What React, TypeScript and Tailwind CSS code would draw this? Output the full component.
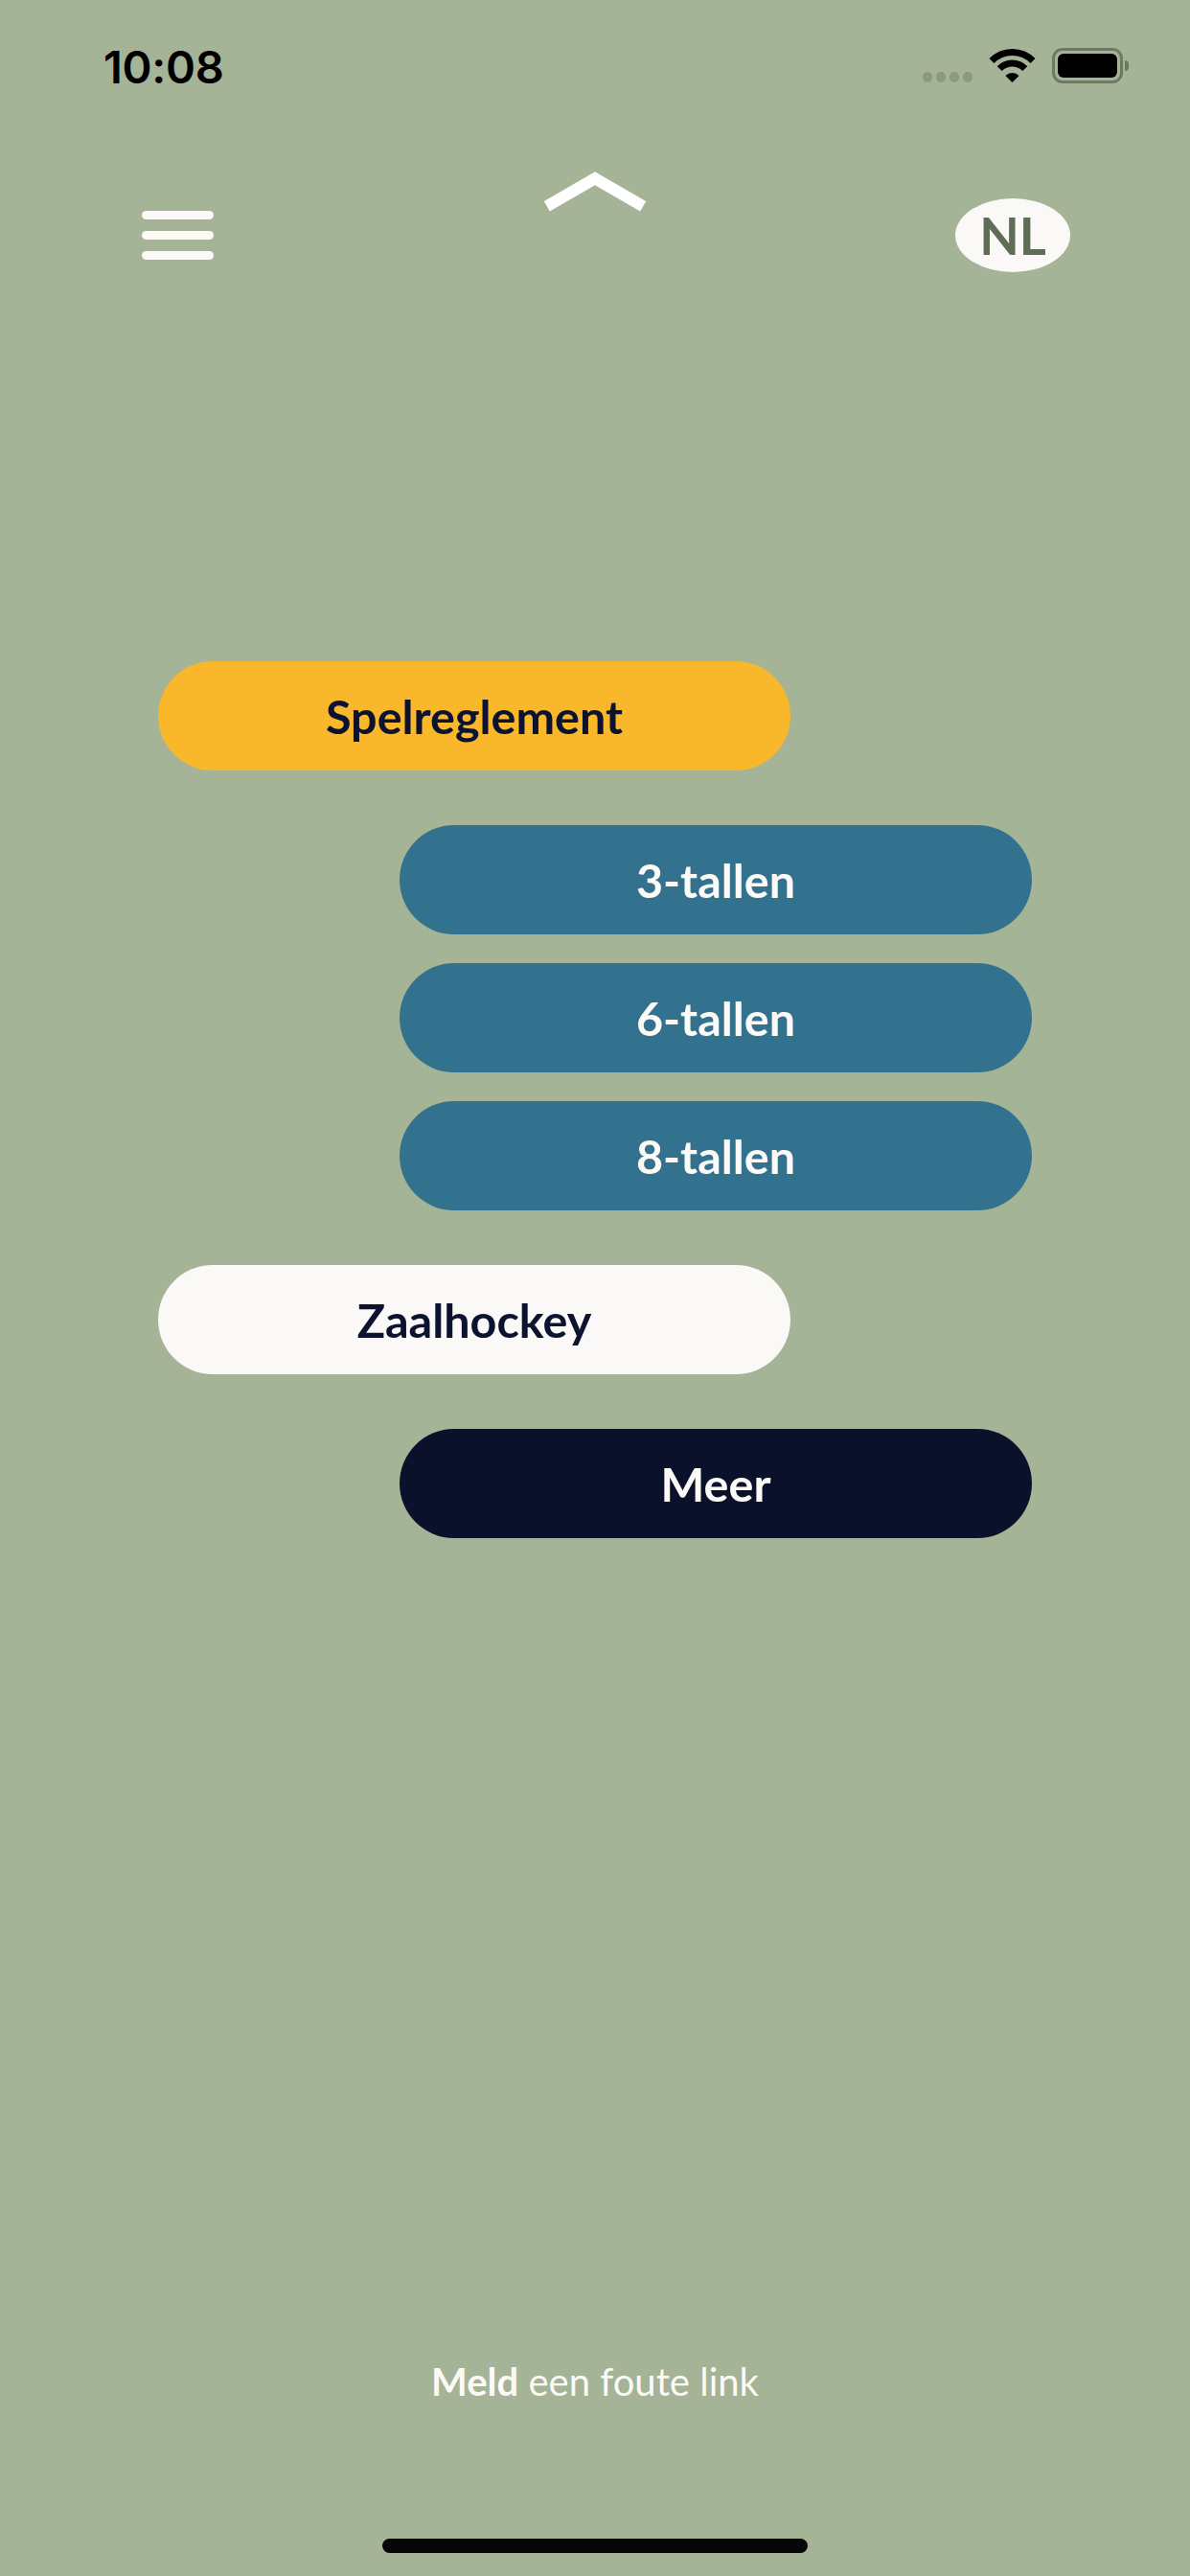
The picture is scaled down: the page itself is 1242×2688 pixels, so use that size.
import React from "react";

const lato = "[font-family:Lato,'Noto_Sans',sans-serif]";

const Pill = ({
  label,
  indent,
  tone,
  className = "",
}: {
  label: string;
  indent: boolean;
  tone: "yellow" | "blue" | "white" | "navy";
  className?: string;
}) => {
  const tones = {
    yellow: "bg-[#f9b72c] text-[#0c1330]",
    blue: "bg-[#32728e] text-[#fbfaf7]",
    white: "bg-[#faf9f7] text-[#0c1330]",
    navy: "bg-[#0b112b] text-[#fbfaf7]",
  };
  return (
    <button
      className={`${indent ? "ml-[417px]" : "ml-[165px]"} flex h-[114px] w-[660px] items-center justify-center rounded-full text-[48.5px] font-bold leading-none ${lato} ${tones[tone]} ${className}`}
    >
      {label}
    </button>
  );
};

const StatusBar = () => (
  <div className="flex h-[136px] items-center justify-between pl-[108px] pr-[64px]">
    <span className="mt-[2px] text-[47px] font-semibold leading-none tracking-[-0.3px] text-black [font-family:Inter,sans-serif]">
      10:08
    </span>
    <div className="flex items-end gap-[17px]">
      {/* signal dots */}
      <div className="mb-[1px] flex gap-[4px]">
        <span className="h-[11px] w-[10px] rounded-full bg-[#8b9a80]" />
        <span className="h-[11px] w-[10px] rounded-full bg-[#8b9a80]" />
        <span className="h-[11px] w-[10px] rounded-full bg-[#8b9a80]" />
        <span className="h-[11px] w-[10px] rounded-full bg-[#8b9a80]" />
      </div>
      {/* wifi */}
      <svg width="49" height="36" viewBox="0 0 49 36" className="mb-[1px]">
        <path d="M3 13.5 A30 30 0 0 1 46 13.5" fill="none" stroke="#000" strokeWidth="7" />
        <path d="M11.2 21.6 A18.5 18.5 0 0 1 37.8 21.6" fill="none" stroke="#000" strokeWidth="7" />
        <path d="M24.5 36 L17.4 28.9 A10 10 0 0 1 31.6 28.9 Z" fill="#000" />
      </svg>
      {/* battery */}
      <div className="flex items-center">
        <div className="h-[37px] w-[74px] rounded-[11px] border-[3px] border-[#6c7a62] p-[3px]">
          <div className="h-full w-full rounded-[6px] bg-black" />
        </div>
        <div className="ml-[2px] h-[11px] w-[4px] rounded-r-full bg-[#6c7a62]" />
      </div>
    </div>
  </div>
);

export default function App() {
  return (
    <div className="flex h-[2688px] w-[1242px] flex-col overflow-hidden bg-[#a5b396]">
      <StatusBar />

      {/* top nav */}
      <div className="mt-[41px] grid grid-cols-3 items-start">
        <div className="ml-[148px] mt-[43px] flex flex-col gap-[12px] justify-self-start">
          <span className="h-[9px] w-[75px] rounded-full bg-[#fbfaf7]" />
          <span className="h-[9px] w-[75px] rounded-full bg-[#fbfaf7]" />
          <span className="h-[9px] w-[75px] rounded-full bg-[#fbfaf7]" />
        </div>
        <svg width="110" height="46" viewBox="0 0 110 46" className="justify-self-center">
          <polyline
            points="4.8,38.3 55,9.3 105.2,38.3"
            fill="none"
            stroke="#ffffff"
            strokeWidth="12"
            strokeLinejoin="miter"
            strokeLinecap="butt"
          />
        </svg>
        <div
          className={`mr-[125px] mt-[30px] flex h-[77px] w-[120px] items-center justify-center justify-self-end rounded-[50%] bg-[#faf9f7] text-[54px] font-bold leading-none text-[#5f6d57] ${lato}`}
        >
          NL
        </div>
      </div>

      {/* menu */}
      <div className="mt-[406px] flex flex-col">
        <Pill label="Spelreglement" indent={false} tone="yellow" />
        <Pill label="3-tallen" indent tone="blue" className="mt-[57px]" />
        <Pill label="6-tallen" indent tone="blue" className="mt-[30px]" />
        <Pill label="8-tallen" indent tone="blue" className="mt-[30px]" />
        <Pill label="Zaalhockey" indent={false} tone="white" className="mt-[57px]" />
        <Pill label="Meer" indent tone="navy" className="mt-[57px]" />
      </div>

      {/* footer */}
      <div className="mt-auto flex flex-col items-center">
        <p className={`text-[40px] leading-none text-[#fbfaf7] ${lato}`}>
          <span className="font-bold">Meld</span> een foute link
        </p>
        <div className="mb-[24px] mt-[144px] h-[15px] w-[444px] rounded-full bg-[#070707]" />
      </div>
    </div>
  );
}
